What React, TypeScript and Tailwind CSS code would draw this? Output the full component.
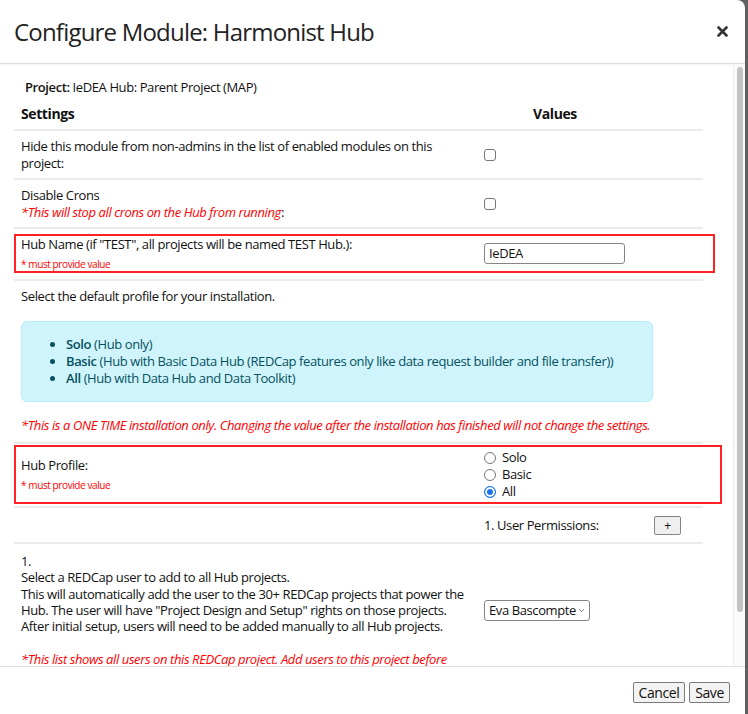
import { ChevronDown } from 'lucide-react';

const Checkbox = () => <span className="block h-[12px] w-[12px] rounded-[3px] border border-[#767676] bg-white" />;

const Radio = ({ checked }: { checked?: boolean }) => (
  <span
    className={
      checked
        ? 'block h-[12px] w-[12px] rounded-full border border-[#1a73f0] bg-[#1a73f0] shadow-[inset_0_0_0_2px_#fff]'
        : 'block h-[12px] w-[12px] rounded-full border border-[#767676] bg-white'
    }
  />
);

const Required = () => <div className="mt-[4px] text-[10px] leading-[14px] text-[#f00]">* must provide value</div>;

const App = () => (
  <div className="flex h-[714px] w-[748px] bg-[#5f5f5f] font-['Open_Sans',sans-serif] text-[13px] leading-[17px] tracking-[-0.4px] text-[#111]">
    <div className="flex w-[745px] flex-col overflow-hidden rounded-tr-[8px] bg-white">
      {/* header */}
      <div className="flex h-[64px] shrink-0 items-center justify-between border-b border-[#dedede] pl-[14px] pr-[17px] shadow-[0_1px_2px_rgba(0,0,0,0.06)]">
        <h1 className="text-[24px] font-normal tracking-[-0.8px] text-[#222]">Configure Module: Harmonist Hub</h1>
        <svg width="11" height="11" viewBox="0 0 11 11" className="text-[#333]">
          <path d="M1.5 1.5l8 8M9.5 1.5l-8 8" stroke="currentColor" strokeWidth="2.6" strokeLinecap="round" />
        </svg>
      </div>

      {/* body */}
      <div className="flex min-h-0 flex-1">
        <div className="min-w-0 flex-1 overflow-hidden pl-[14px]">
          <div className="w-[689px]">
            <div className="pl-[11px] pt-[15px]">
              <b className="font-semibold">Project:</b> IeDEA Hub: Parent Project (MAP)
            </div>

            <div className="grid grid-cols-[463px_1fr] border-b-2 border-[#ebebeb] pb-[7px] pt-[9px] text-[14px] font-bold">
              <div className="px-[7px]">Settings</div>
              <div className="pl-[56px]">Values</div>
            </div>

            <div className="grid grid-cols-[463px_1fr] items-center border-b-2 border-[#ebebeb] pb-[6px] pt-[7px]">
              <div className="whitespace-nowrap px-[7px]">
                <div>Hide this module from non-admins in the list of enabled modules on this</div>
                <div>project:</div>
              </div>
              <div className="px-[7px]">
                <Checkbox />
              </div>
            </div>

            <div className="grid grid-cols-[463px_1fr] items-center border-b-2 border-[#ebebeb] pb-[6px] pt-[7px]">
              <div className="whitespace-nowrap px-[7px]">
                <div>Disable Crons</div>
                <div>
                  <i className="text-[#f00]">*This will stop all crons on the Hub from running</i>:
                </div>
              </div>
              <div className="px-[7px]">
                <Checkbox />
              </div>
            </div>

            <div className="border-b-2 border-[#ebebeb] pb-[6px] pt-[5px]">
              <div className="grid w-[701px] grid-cols-[463px_1fr] items-center border-2 border-[#f22]">
                <div className="whitespace-nowrap px-[5px]">
                  <div>Hub Name (if "TEST", all projects will be named TEST Hub.):</div>
                  <Required />
                </div>
                <div className="px-[5px]">
                  <div className="h-[21px] w-[141px] rounded-[3px] border border-[#858585] px-[4px] text-[13px] leading-[19px]">IeDEA</div>
                </div>
              </div>
            </div>

            <div className="px-[7px] pb-[8px] pt-[7px]">
              <div>Select the default profile for your installation.</div>
              <div className="mt-[16px] w-[632px] rounded-[6px] border border-[#b6effb] bg-[#cff4fc] py-[14px] pl-[44px] text-[#055160]">
                <ul className="list-disc">
                  <li>
                    <b className="font-semibold">Solo</b> (Hub only)
                  </li>
                  <li>
                    <b className="font-semibold">Basic</b> (Hub with Basic Data Hub (REDCap features only like data request builder and file transfer))
                  </li>
                  <li>
                    <b className="font-semibold">All</b> (Hub with Data Hub and Data Toolkit)
                  </li>
                </ul>
              </div>
              <div className="mt-[15px] whitespace-nowrap italic text-[#f00]">
                *This is a ONE TIME installation only. Changing the value after the installation has finished will not change the settings.
              </div>
            </div>

            <div className="border-b-2 border-t-2 border-[#ebebeb] pb-[2px] pt-[1px]">
              <div className="grid w-[708px] grid-cols-[463px_1fr] items-center border-2 border-[#f22] pb-[2px] pt-[2px]">
                <div className="px-[5px]">
                  <div>Hub Profile:</div>
                  <Required />
                </div>
                <div className="flex flex-col px-[5px]">
                  {['Solo', 'Basic', 'All'].map((p) => (
                    <label key={p} className="flex items-center gap-[6px]">
                      <Radio checked={p === 'All'} />
                      {p}
                    </label>
                  ))}
                </div>
              </div>
            </div>

            <div className="grid grid-cols-[463px_1fr] items-center border-b-2 border-[#ebebeb] pb-[7px] pt-[8px]">
              <div />
              <div className="flex items-center px-[7px]">
                <span className="w-[170px]">1. User Permissions:</span>
                <button type="button" className="h-[19px] w-[27px] rounded-[2px] border border-[#858585] bg-[#efefef] text-[12px] leading-[17px]">
                  +
                </button>
              </div>
            </div>

            <div className="grid grid-cols-[463px_1fr] items-center pb-[24px] pt-[9px] leading-[16.3px]">
              <div className="whitespace-nowrap px-[7px]">
                <div>1.</div>
                <div>Select a REDCap user to add to all Hub projects.</div>
                <div>This will automatically add the user to the 30+ REDCap projects that power the</div>
                <div>Hub. The user will have "Project Design and Setup" rights on those projects.</div>
                <div>After initial setup, users will need to be added manually to all Hub projects.</div>
                <div className="h-[16.3px]" />
                <div className="italic text-[#f00]">*This list shows all users on this REDCap project. Add users to this project before</div>
              </div>
              <div className="px-[7px]">
                <div className="flex h-[21px] w-[106px] items-center justify-between rounded-[3px] border border-[#858585] bg-white pl-[4px] pr-[3px] text-[13px]">
                  Eva Bascompte
                  <ChevronDown size={9} strokeWidth={1.5} />
                </div>
              </div>
            </div>
          </div>
        </div>
        {/* scrollbar */}
        <div className="w-[12px] shrink-0 border-l border-[#ececec] bg-[#fafafa] pt-[3px]">
          <div className="mx-auto h-[545px] w-[6px] rounded-full bg-[#c2c2c2]" />
        </div>
      </div>

      {/* footer */}
      <div className="flex h-[48px] shrink-0 justify-end gap-[4px] border-t border-[#dedede] pr-[15px] pt-[15px]">
        <button type="button" className="h-[21px] w-[52px] rounded-[2px] border border-[#7a7a7a] bg-[#f3f3f3] text-[14px] leading-[19px]">
          Cancel
        </button>
        <button type="button" className="h-[21px] w-[41px] rounded-[2px] border border-[#7a7a7a] bg-[#f3f3f3] text-[14px] leading-[19px]">
          Save
        </button>
      </div>
    </div>
  </div>
);

export default App;
